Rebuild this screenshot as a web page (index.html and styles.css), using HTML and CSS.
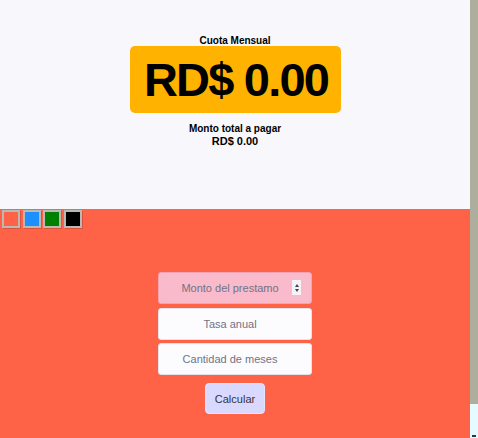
FILE: index.html
```html
<!DOCTYPE html>
<html lang="es">
<head>
<meta charset="utf-8">
<title>Calculadora de préstamo</title>
<link rel="stylesheet" href="styles.css">
</head>
<body>
<div class="page">
  <main class="main">
    <section class="result">
      <div class="label">Cuota Mensual</div>
      <div class="quota">RD$ 0.00</div>
      <div class="total-label">Monto total a pagar</div>
      <div class="total">RD$ 0.00</div>
    </section>
    <section class="panel">
      <div class="swatches">
        <button class="swatch swatch-tomato" aria-label="tomato"></button>
        <button class="swatch swatch-blue" aria-label="azul"></button>
        <button class="swatch swatch-green" aria-label="verde"></button>
        <button class="swatch swatch-black" aria-label="negro"></button>
      </div>
      <form class="form">
        <div class="field hover">
          <input class="input" type="text" placeholder="Monto del prestamo">
          <span class="spinner"><span class="up"></span><span class="down"></span></span>
        </div>
        <div class="field">
          <input class="input" type="text" placeholder="Tasa anual">
        </div>
        <div class="field">
          <input class="input" type="text" placeholder="Cantidad de meses">
        </div>
        <button class="calc" type="button">Calcular</button>
      </form>
    </section>
  </main>
  <div class="scrollbar">
    <div class="thumb"></div>
    <div class="track"><span class="arrow"></span></div>
  </div>
</div>
</body>
</html>
```
FILE: styles.css
```css
* { box-sizing: border-box; }
html, body { margin: 0; padding: 0; }
body {
  font-family: "Liberation Sans", Arial, sans-serif;
  overflow: hidden;
}
.page {
  display: flex;
  width: 478px;
  height: 438px;
}
.main {
  width: 470px;
  display: flex;
  flex-direction: column;
}
.result {
  height: 209px;
  background: #f8f8fc;
  display: flex;
  flex-direction: column;
  align-items: center;
  padding-top: 35px;
  color: #000;
}
.label {
  font-size: 10px;
  font-weight: bold;
  line-height: 11px;
}
.quota {
  background: #ffb300;
  border-radius: 5px;
  font-size: 47px;
  font-weight: bold;
  line-height: 54px;
  padding: 7px 0 6px 2px;
  letter-spacing: -1.8px;
  width: 211px;
  text-align: center;
}
.total-label {
  margin-top: 9.5px;
  font-size: 10px;
  font-weight: bold;
  line-height: 12px;
}
.total {
  font-size: 11px;
  font-weight: bold;
  line-height: 12px;
}
.panel {
  flex: 1;
  background: #ff6347;
  display: flex;
  flex-direction: column;
}
.swatches {
  display: flex;
  gap: 2.5px;
  padding: 1px 0 0 2px;
}
.swatch {
  width: 18px;
  height: 18px;
  padding: 0;
  border: 2px solid #bdb8b4;
  box-shadow: 1px 1px 0 rgba(0,0,0,0.15);
}
.swatch-tomato { background: #ff6347; }
.swatch-blue { background: #1e8fff; }
.swatch-green { background: #008000; }
.swatch-black { background: #000; }
.form {
  margin-top: 44px;
  display: flex;
  flex-direction: column;
  align-items: center;
  gap: 3.5px;
}
.field {
  position: relative;
  width: 154px;
  height: 32px;
}
.input {
  width: 100%;
  height: 100%;
  border: 1px solid #e2e2ea;
  border-radius: 3px;
  background: #fcfcff;
  font-family: "Liberation Sans", Arial, sans-serif;
  font-size: 11px;
  text-align: center;
  color: #333;
  outline: none;
  padding: 0 10px 0 0;
}
.input::placeholder { color: #727286; }
.field.hover .input {
  background: #f9bacb;
  border-color: #f0a3b4;
}
.spinner {
  position: absolute;
  right: 11px;
  top: 8px;
  width: 9px;
  height: 15px;
  background: #f4f4f8;
  display: flex;
  flex-direction: column;
  align-items: center;
  justify-content: center;
  gap: 2px;
}
.spinner .up {
  width: 0; height: 0;
  border-left: 2.5px solid transparent;
  border-right: 2.5px solid transparent;
  border-bottom: 3px solid #444;
}
.spinner .down {
  width: 0; height: 0;
  border-left: 2.5px solid transparent;
  border-right: 2.5px solid transparent;
  border-top: 3px solid #444;
}
.calc {
  margin-top: 4.5px;
  width: 60px;
  height: 31px;
  border: 1px solid #e4e4ff;
  border-radius: 4px;
  background: #d9d8ff;
  font-family: "Liberation Sans", Arial, sans-serif;
  font-size: 11px;
  color: #333;
  padding: 0;
}
.scrollbar {
  width: 8px;
  display: flex;
  flex-direction: column;
}
.thumb {
  height: 404px;
  background: #aeae9f;
}
.track {
  flex: 1;
  background: #e6fbff;
  display: flex;
  align-items: flex-end;
  justify-content: center;
}
.arrow {
  width: 4px;
  height: 2px;
  background: #333344;
  margin-bottom: 1px;
}
```
